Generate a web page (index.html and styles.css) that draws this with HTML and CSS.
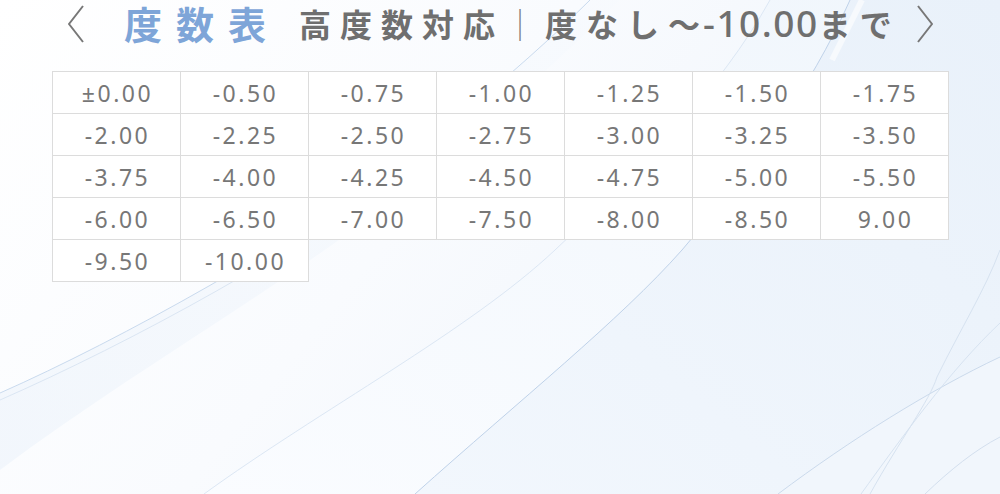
FILE: index.html
```html
<!DOCTYPE html>
<html lang="ja">
<head>
<meta charset="utf-8">
<title>度数表</title>
<link rel="stylesheet" href="styles.css">
</head>
<body>
<svg class="bg" viewBox="0 0 1000 494" preserveAspectRatio="none" aria-hidden="true">
  <defs>
    <linearGradient id="base" x1="0" y1="0" x2="1" y2="0.4">
      <stop offset="0" stop-color="#ffffff"/>
      <stop offset="0.5" stop-color="#f9fbfe"/>
      <stop offset="1" stop-color="#eef4fb"/>
    </linearGradient>
    <linearGradient id="bandA" x1="0" y1="1" x2="1" y2="0">
      <stop offset="0" stop-color="#f2f7fd"/>
      <stop offset="1" stop-color="#e9f1fa"/>
    </linearGradient>
    <linearGradient id="bandB" x1="0" y1="1" x2="1" y2="0">
      <stop offset="0" stop-color="#fafcff"/>
      <stop offset="1" stop-color="#f0f6fc"/>
    </linearGradient>
    <linearGradient id="bandL" x1="0" y1="1" x2="1" y2="0">
      <stop offset="0" stop-color="#eef4fb"/>
      <stop offset="1" stop-color="#f7fafe"/>
    </linearGradient>
  </defs>
  <rect width="1000" height="494" fill="url(#base)"/>
  <path d="M0 393 C120 340 300 240 420 150 C480 100 540 50 590 0 L620 0 C560 60 470 140 380 210 C260 300 120 380 0 470 Z" fill="url(#bandL)" opacity="0.7"/>
  <path d="M204 494 C320 410 470 330 555 250 C640 170 720 90 770 0 L1000 0 L1000 494 Z" fill="url(#bandB)"/>
  <path d="M415 494 C520 400 620 320 682 250 C750 170 810 90 850 0 L1000 0 L1000 494 Z" fill="url(#bandA)"/>
  <path d="M778 494 C850 440 930 390 1000 357 L1000 494 Z" fill="#f1f6fc"/>
  <path d="M0 393 C120 340 300 240 420 150 C480 100 540 50 590 0" fill="none" stroke="#c9daee" stroke-width="1"/>
  <path d="M0 400 C130 343 305 248 425 156" fill="none" stroke="#dbe6f3" stroke-width="1"/>
  <path d="M204 494 C320 410 470 330 555 250 C640 170 720 90 770 0" fill="none" stroke="#dce7f4" stroke-width="1"/>
  <path d="M415 494 C520 400 620 320 682 250 C750 170 810 90 850 0" fill="none" stroke="#bfd2e9" stroke-width="1"/>
  <path d="M778 494 C850 440 930 390 1000 357" fill="none" stroke="#cbdaec" stroke-width="1"/>
  <path d="M861 494 C900 440 950 370 1000 323" fill="none" stroke="#d7e3f1" stroke-width="1"/>
  <path d="M925 494 C950 470 975 450 1000 437" fill="none" stroke="#d3dfee" stroke-width="1"/>
  <path d="M870 494 C900 440 930 400 937 377 C960 330 985 290 1000 250" fill="none" stroke="#d6e2f0" stroke-width="1"/>
  <path d="M832 60 C842 40 852 20 862 0" fill="none" stroke="#ffffff" stroke-width="6" opacity="0.6"/>
</svg>

<main class="page">
  <header class="head">
    <svg class="chev chev-left" viewBox="0 0 16 38" aria-hidden="true"><polyline points="15,1 1,19 15,37" fill="none" stroke="#777" stroke-width="2"/></svg>
    <h1 class="title">度数表</h1>
    <p class="sub">高度数対応<span class="bar">｜</span>度なし～<span class="num">-10.00</span>まで</p>
    <svg class="chev chev-right" viewBox="0 0 16 38" aria-hidden="true"><polyline points="1,1 15,19 1,37" fill="none" stroke="#777" stroke-width="2"/></svg>
  </header>

  <div class="table">
    <div class="cell">±0.00</div>
    <div class="cell">-0.50</div>
    <div class="cell">-0.75</div>
    <div class="cell">-1.00</div>
    <div class="cell">-1.25</div>
    <div class="cell">-1.50</div>
    <div class="cell">-1.75</div>
    <div class="cell">-2.00</div>
    <div class="cell">-2.25</div>
    <div class="cell">-2.50</div>
    <div class="cell">-2.75</div>
    <div class="cell">-3.00</div>
    <div class="cell">-3.25</div>
    <div class="cell">-3.50</div>
    <div class="cell">-3.75</div>
    <div class="cell">-4.00</div>
    <div class="cell">-4.25</div>
    <div class="cell">-4.50</div>
    <div class="cell">-4.75</div>
    <div class="cell">-5.00</div>
    <div class="cell">-5.50</div>
    <div class="cell">-6.00</div>
    <div class="cell">-6.50</div>
    <div class="cell">-7.00</div>
    <div class="cell">-7.50</div>
    <div class="cell">-8.00</div>
    <div class="cell">-8.50</div>
    <div class="cell">9.00</div>
    <div class="cell">-9.50</div>
    <div class="cell">-10.00</div>
  </div>
</main>
</body>
</html>
```

FILE: styles.css
```css
* { box-sizing: border-box; }

html, body {
  margin: 0;
  padding: 0;
  width: 1000px;
  height: 494px;
  overflow: hidden;
}

body {
  position: relative;
  font-family: "Noto Sans", "Noto Sans CJK JP", sans-serif;
  background: #ffffff;
}

.bg {
  position: absolute;
  left: 0;
  top: 0;
  width: 1000px;
  height: 494px;
  z-index: 0;
}

.page {
  position: relative;
  z-index: 1;
  display: flex;
  flex-direction: column;
}

.head {
  display: flex;
  align-items: center;
  height: 46px;
  padding-left: 68px;
}

.chev {
  width: 16px;
  height: 38px;
  flex: none;
  margin-top: 2px;
}

.title {
  margin: 0 0 0 40px;
  font-family: "Noto Sans CJK JP", sans-serif;
  font-size: 38px;
  font-weight: 700;
  letter-spacing: 14px;
  color: #7ea5d8;
  line-height: 46px;
}

.sub {
  margin: 0 0 0 19px;
  font-family: "Noto Sans CJK JP", sans-serif;
  font-size: 32px;
  font-weight: 700;
  letter-spacing: 9px;
  color: #6f6f6f;
  line-height: 46px;
  white-space: nowrap;
}

.bar {
  font-weight: 300;
  color: #777777;
}

.num {
  font-family: "Noto Sans", sans-serif;
  font-size: 37px;
  font-weight: 500;
  letter-spacing: 1.5px;
  margin-left: -6px;
}

.chev-right {
  margin-left: 16px;
}

.table {
  display: grid;
  grid-template-columns: 129px repeat(6, 128px);
  grid-template-rows: 43px repeat(4, 42px);
  margin: 25px 0 0 52px;
  width: 897px;
}

.cell {
  display: flex;
  align-items: center;
  justify-content: center;
  padding-left: 2px;
  background: #ffffff;
  border-right: 1px solid #dcdcdc;
  border-bottom: 1px solid #dcdcdc;
  font-family: "Noto Sans", sans-serif;
  font-size: 23px;
  letter-spacing: 2.5px;
  color: #777777;
}

.cell:nth-child(7n+1) { border-left: 1px solid #dcdcdc; }
.cell:nth-child(-n+7) { border-top: 1px solid #dcdcdc; }
```
